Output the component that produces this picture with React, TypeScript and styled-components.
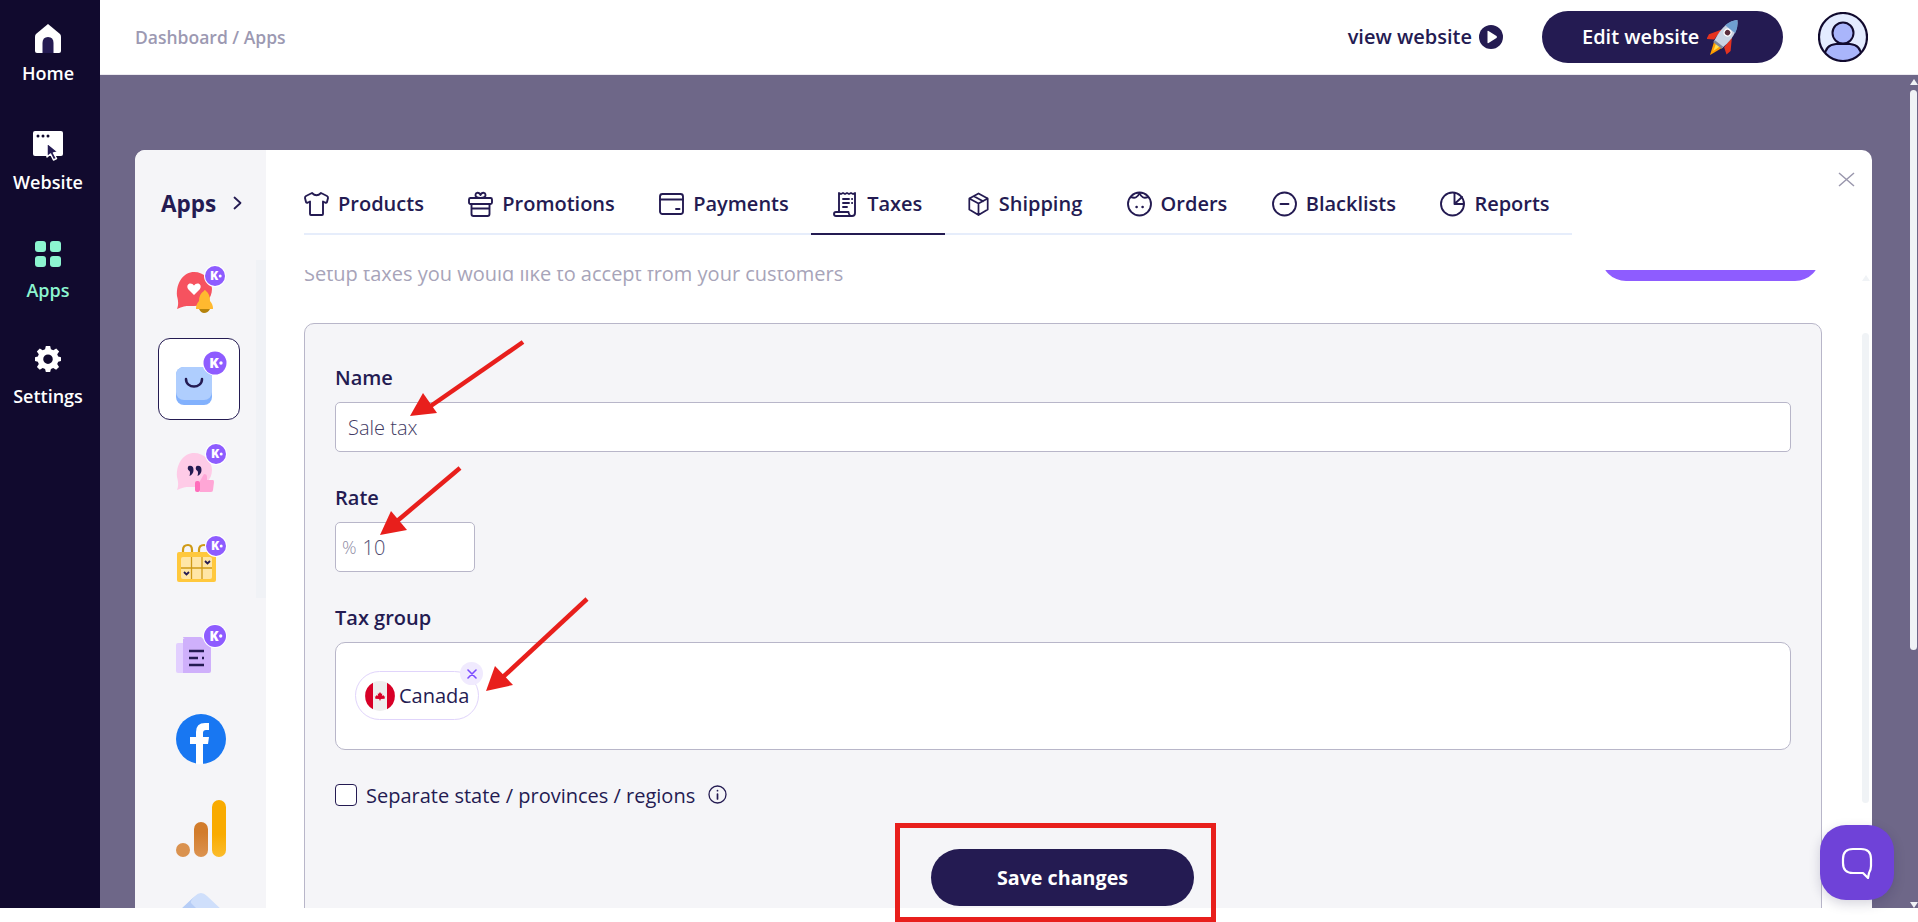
import React from 'react';
import styled, { createGlobalStyle } from 'styled-components';

const INK = '#241b52';

const GlobalStyle = createGlobalStyle`
  html, body {
    margin: 0;
    height: 100%;
    overflow: hidden;
    background: #fff;
    font-family: "Open Sans", "Noto Sans", sans-serif;
  }
  * { box-sizing: border-box; }
`;

const Page = styled.div`
  position: relative;
  width: 1918px;
  height: 922px;
  overflow: hidden;
`;

const Frame = styled.div`
  display: flex;
  height: 908px;
  overflow: hidden;
`;

const Sidebar = styled.nav`
  flex: 0 0 100px;
  display: flex;
  flex-direction: column;
  align-items: center;
  padding: 24px 4px 0 0;
  background: #110a2e;
`;

const NavItem = styled.a<{ $gap: number; $after: number; $active?: boolean }>`
  display: flex;
  flex-direction: column;
  align-items: center;
  gap: ${(p) => p.$gap}px;
  margin-bottom: ${(p) => p.$after}px;
  color: ${(p) => (p.$active ? '#8cf5d0' : '#fff')};
  font-size: 18px;
  font-weight: 600;
  line-height: 24px;
  svg { display: block; }
`;

const Main = styled.div`
  flex: 1;
  min-width: 0;
  display: flex;
  flex-direction: column;
`;

const Header = styled.header`
  flex: 0 0 75px;
  display: flex;
  align-items: center;
  padding: 0 50px 1px 35px;
  background: #fff;
  border-bottom: 1px solid #eceaf0;
`;

const Crumbs = styled.div`
  flex: 1;
  color: #9c99b2;
  font-size: 17.5px;
  font-weight: 600;
`;

const ViewLink = styled.a`
  display: flex;
  align-items: center;
  gap: 7px;
  color: ${INK};
  font-size: 20px;
  font-weight: 600;
`;

const EditButton = styled.button`
  display: flex;
  align-items: center;
  gap: 8px;
  width: 241px;
  height: 52px;
  margin: 0 35px 0 39px;
  padding: 0 0 0 40px;
  border: 0;
  border-radius: 26px;
  background: ${INK};
  color: #fff;
  font: 600 20px "Open Sans", sans-serif;
`;

const Backdrop = styled.div`
  flex: 1;
  min-height: 0;
  display: flex;
  justify-content: space-between;
  padding: 0 1px 0 35px;
  background: #6e6788;
`;

const Modal = styled.section`
  width: 1737px;
  margin-top: 75px;
  display: flex;
  background: #fff;
  border-radius: 10px 10px 0 0;
  overflow: hidden;
`;

const ModalSide = styled.aside`
  position: relative;
  flex: 0 0 131px;
  padding: 0 0 0 23px;
  background: #f5f5f8;
`;

const SideTrack = styled.div`
  position: absolute;
  top: 110px;
  right: 0;
  width: 10px;
  height: 338px;
  background: #f0f2f6;
`;

const SideTitle = styled.h2`
  display: flex;
  align-items: center;
  gap: 17px;
  height: 108px;
  margin: 0 0 -10px;
  padding: 0 0 2px 3px;
  color: ${INK};
  font-size: 22.5px;
  font-weight: 700;
`;

const AppList = styled.div`
  position: relative;
  display: flex;
  flex-direction: column;
  gap: 8px;
`;

const AppTile = styled.div<{ $active?: boolean }>`
  flex: 0 0 82px;
  width: 82px;
  border-radius: 12px;
  border: ${(p) => (p.$active ? `1.5px solid ${INK}` : '0')};
  background: ${(p) => (p.$active ? '#fff' : 'transparent')};
  svg { display: block; margin: ${(p) => (p.$active ? '-1.5px' : '0')}; }
`;

const ModalMain = styled.div`
  flex: 1;
  min-width: 0;
  display: flex;
  flex-direction: column;
  padding-left: 38px;
`;

const TabBar = styled.div`
  flex: 0 0 85px;
  min-height: 0;
  width: 1268px;
  display: flex;
  align-items: flex-start;
  border-bottom: 2px solid #e6edfb;
`;

const Tab = styled.a<{ $active?: boolean }>`
  display: flex;
  align-items: center;
  gap: 9px;
  height: 85px;
  padding: 24px 22.2px 0;
  color: ${INK};
  font-size: 20px;
  font-weight: 600;
  border-bottom: 2px solid ${(p) => (p.$active ? INK : 'transparent')};
  &:first-child { padding-left: 0; }
  svg { flex: none; }
`;

const CloseMark = styled.svg`
  position: absolute;
  top: 172px;
  left: 1838px;
`;

const Body = styled.div`
  flex: 1;
  min-height: 0;
  display: flex;
  margin-top: 35px;
`;

const Viewport = styled.div`
  flex: 0 0 1518px;
  overflow: hidden;
`;

const Scrolled = styled.div`
  margin-top: -39px;
`;

const TopRow = styled.div`
  display: flex;
  justify-content: space-between;
  height: 56px;
  margin-bottom: 36px;
  padding-right: 2px;
`;

const Lead = styled.p`
  align-self: flex-end;
  margin: 0;
  color: #a7a4b9;
  font-size: 20px;
  line-height: 26px;
`;

const AddButton = styled.button`
  width: 219px;
  height: 50px;
  border: 0;
  border-radius: 25px;
  background: #8e5cff;
`;

const Card = styled.div`
  padding: 42px 30px 60px;
  background: #f5f5f8;
  border: 1px solid #b8b6c9;
  border-radius: 10px;
`;

const Label = styled.label`
  display: block;
  margin-bottom: 12px;
  color: ${INK};
  font-size: 20px;
  font-weight: 600;
  line-height: 24px;
`;

const Field = styled.div`
  margin-bottom: 34px;
`;

const TextInput = styled.input`
  display: block;
  width: 100%;
  height: 50px;
  padding: 0 12px;
  border: 1px solid #b8b6c9;
  border-radius: 5px;
  background: #fff;
  color: #3f3a63;
  font: 300 20px "Open Sans", sans-serif;
  outline: none;
`;

const RateBox = styled.div`
  display: flex;
  align-items: center;
  gap: 6px;
  width: 140px;
  height: 50px;
  padding: 0 6px;
  border: 1px solid #b8b6c9;
  border-radius: 5px;
  background: #fff;
  color: #4f4a70;
  font-size: 20px;
  font-weight: 300;
`;

const RateSign = styled.span`
  color: #8f8ca4;
  font-size: 18px;
`;

const TagBox = styled.div`
  display: flex;
  align-items: flex-start;
  height: 108px;
  padding: 28px 19px;
  border: 1px solid #b8b6c9;
  border-radius: 10px;
  background: #fff;
`;

const Chip = styled.div`
  position: relative;
  display: flex;
  align-items: center;
  gap: 4px;
  width: 124px;
  height: 49px;
  padding-left: 9px;
  border: 1px solid #e0d4fb;
  border-radius: 25px;
  background: #fff;
  color: ${INK};
  font-size: 20px;
`;

const ChipClose = styled.span`
  position: absolute;
  top: -10px;
  right: -5px;
  display: flex;
  align-items: center;
  justify-content: center;
  width: 23px;
  height: 23px;
  border-radius: 50%;
  background: #f0eafe;
`;

const CheckRow = styled.div`
  display: flex;
  align-items: center;
  gap: 9px;
  height: 22px;
  margin: 0 0 43px;
  color: ${INK};
  font-size: 20px;
`;

const Box = styled.span`
  flex: none;
  width: 22px;
  height: 22px;
  border: 1.5px solid ${INK};
  border-radius: 4px;
  background: #fff;
`;

const InfoIcon = styled.svg`
  margin: -2px 0 0 4px;
`;

const SaveButton = styled.button`
  display: block;
  width: 263px;
  height: 57px;
  margin: 0 0 0 596px;
  border: 0;
  border-radius: 29px;
  background: ${INK};
  color: #fff;
  font: 700 19.7px "Open Sans", sans-serif;
`;

const InnerScroll = styled.div`
  display: flex;
  flex-direction: column;
  align-items: center;
  width: 7px;
  margin-left: 40px;
  padding-top: 5px;
`;

const ArrowUp = styled.span<{ $color: string }>`
  flex: none;
  width: 0;
  height: 0;
  border-left: 4px solid transparent;
  border-right: 4px solid transparent;
  border-bottom: 6px solid ${(p) => p.$color};
`;

const ArrowDown = styled(ArrowUp)`
  border-bottom: 0;
  border-top: 6px solid ${(p) => p.$color};
  margin-top: auto;
`;

const Thumb = styled.div<{ $top: number; $height: number }>`
  flex: none;
  width: 7px;
  height: ${(p) => p.$height}px;
  margin-top: ${(p) => p.$top}px;
  border-radius: 4px;
  background: #f0f3f6;
`;

const PageScroll = styled.div`
  display: flex;
  flex-direction: column;
  align-items: center;
  width: 7px;
  padding: 4px 0 0;
`;

const ChatBubble = styled.button`
  position: absolute;
  left: 1820px;
  top: 825px;
  display: flex;
  align-items: center;
  justify-content: center;
  width: 74px;
  height: 75px;
  padding: 0;
  border: 0;
  border-radius: 26px;
  background: #6f42d8;
  box-shadow: 0 4px 12px rgba(30, 20, 70, 0.18);
`;

const Annotations = styled.svg`
  position: absolute;
  inset: 0;
  pointer-events: none;
`;

const stroke = {
  fill: 'none',
  stroke: INK,
  strokeWidth: 1.9,
  strokeLinecap: 'round' as const,
  strokeLinejoin: 'round' as const,
};

const TabIcon = ({ children, width = 25 }: { children: React.ReactNode; width?: number }) => (
  <svg width={width} height="26" viewBox="0 0 25 26" {...stroke}>
    {children}
  </svg>
);

const tabs = [
  {
    label: 'Products',
    icon: (
      <TabIcon>
        <path d="M8 2 L2 5 Q1 5.500 1 7 L2 11 Q2.500 12 4 11.500 L6 10.500 V23 Q6 24 7 24 H18 Q19 24 19 23 V10.500 L21 11.500 Q22.500 12 23 11 L24 7 Q24 5.500 23 5 L17 2 Q12.500 6.500 8 2 Z" />
      </TabIcon>
    ),
  },
  {
    label: 'Promotions',
    icon: (
      <TabIcon>
        <rect x="1" y="7" width="23" height="6" rx="1.500" />
        <path d="M3.500 13 V23 Q3.500 25 5.500 25 H19.500 Q21.500 25 21.500 23 V13 M3.500 17.500 H21.500" />
        <path d="M12.500 7 C9 7 7 5.500 7.500 3.500 C8 1 11.500 1 12.500 4 C13.500 1 17 1 17.500 3.500 C18 5.500 16 7 12.500 7 Z" />
      </TabIcon>
    ),
  },
  {
    label: 'Payments',
    icon: (
      <TabIcon>
        <rect x="1" y="3" width="23" height="20" rx="2.500" />
        <path d="M1 8.500 H24 M17 18 H20.500" />
      </TabIcon>
    ),
  },
  {
    label: 'Taxes',
    active: true,
    icon: (
      <TabIcon>
        <path d="M6 21 V2 L8 3 L10 2 L12 3 L14 2 L16 3 L18 2 L20 3 L22 2 V22 Q22 25 19 25 H3 Q1 25 1 23 Q1 21 3 21 H15.500 Q16 25 19 25" />
        <path d="M10 8 H16 M10 12 H16 M10 16 H14 M19 8 H19.200 M19 12 H19.200" />
      </TabIcon>
    ),
  },
  {
    label: 'Shipping',
    icon: (
      <TabIcon width={23}>
        <path d="M12.500 1.500 L22.500 7 V19 L12.500 25 L2.500 19 V7 Z M2.500 7 L12.500 12.500 L22.500 7 M12.500 12.500 V25 M7.500 4.500 L17.500 10" />
      </TabIcon>
    ),
  },
  {
    label: 'Orders',
    icon: (
      <TabIcon>
        <circle cx="12.500" cy="13" r="11.500" />
        <path d="M4 6 Q10 8.500 12.500 2 Q15 8.500 21 6" />
        <path d="M9.500 16 H9.700 M15.500 16 H15.700" strokeWidth="2.400" />
      </TabIcon>
    ),
  },
  {
    label: 'Blacklists',
    icon: (
      <TabIcon>
        <circle cx="12.500" cy="13" r="11.500" />
        <path d="M8.500 13 H16.500" />
      </TabIcon>
    ),
  },
  {
    label: 'Reports',
    icon: (
      <TabIcon>
        <circle cx="12.500" cy="13" r="11.500" />
        <path d="M14.500 2 V13 H23.500 M14.500 13 L22 6" />
      </TabIcon>
    ),
  },
];

const KBadge = ({ x, y, r }: { x: number; y: number; r: number }) => (
  <g>
    <circle cx={x} cy={y} r={r + 1} fill="#fff" />
    <circle cx={x} cy={y} r={r} fill="#8e5cff" />
    <text
      x={x - r * 0.5}
      y={y + r * 0.42}
      fill="#fff"
      fontFamily="Open Sans, sans-serif"
      fontWeight="800"
      fontSize={r * 1.2}
    >
      K
    </text>
    <circle cx={x + r * 0.52} cy={y} r={r * 0.15} fill="#fff" />
  </g>
);

const BellBubble = () => (
  <svg width="82" height="82" viewBox="0 0 82 82">
    <path d="M36 24 C46 24 54 32 54 41 C54 51 46 58 36 58 C31 58 27 57 19 61 C21 56 20 52 19 48 C18 34 26 24 36 24 Z" fill="#f6525f" />
    <path d="M36 47 L30 41 Q28 37 31.500 35.500 Q34.500 35 36 37.500 Q37.500 35 40.500 35.500 Q44 37 42 41 Z" fill="#fff" />
    <g transform="translate(-6 -1)">
      <path d="M44 62 Q44 57 47 54 Q47 47 52 44 Q52.500 42 54 44 Q58 47 58 54 Q61 57 61 62 Z" fill="#ffb92f" />
      <path d="M47 62 H58 Q56 66 52 66 Q49 66 47 62 Z" fill="#b5830c" />
    </g>
    <KBadge x={57} y={28} r={10} />
  </svg>
);

const BagTile = () => (
  <svg width="82" height="82" viewBox="0 0 82 82">
    <rect x="18" y="29" width="36" height="38" rx="8" fill="#82b1fd" />
    <rect x="18" y="29" width="36" height="33" rx="8" fill="#afcefe" />
    <path d="M28 41 C28 51 44 51 44 41" fill="none" stroke={INK} strokeWidth="2.500" strokeLinecap="round" />
    <KBadge x={57} y={25} r={11.500} />
  </svg>
);

const QuoteBubble = () => (
  <svg width="82" height="82" viewBox="0 0 82 82">
    <path d="M36 25 C46 25 54 33 54 42 C54 52 46 59 36 59 C31 59 27 58 19 62 C21 57 20 53 19 49 C18 35 26 25 36 25 Z" fill="#fecbe7" />
    <g transform="translate(1.500 -1)">
      <path d="M29 39 Q34 38 34 43 Q34 47 30 49 Q31 45 30 44 Q27 42 29 39 Z M37 39 Q42 38 42 43 Q42 47 38 49 Q39 45 38 44 Q35 42 37 39 Z" fill={INK} />
    </g>
    <g transform="translate(-3 2)">
      <rect x="40" y="51" width="5" height="11" rx="2" fill="#ff6dbb" />
      <path d="M45 62 V51 L49 44 Q52 44 52 47 V50 H58 Q59 50 59 52 L58 60 Q58 62 56 62 Z" fill="#ffa6d6" />
    </g>
    <KBadge x={58} y={26} r={10} />
  </svg>
);

const CalendarTile = () => (
  <svg width="82" height="82" viewBox="0 0 82 82">
    <path d="M25 38 V32 Q25 27 30 27 Q34 27 34 32 V38 M41 38 V32 Q41 27 46 27 Q50 27 50 32 V38" fill="none" stroke="#cf9a16" strokeWidth="2.200" />
    <rect x="19" y="34" width="39" height="30" rx="2" fill="#ffc83d" />
    <rect x="23" y="39" width="31" height="22" rx="2" fill="#ffe6a6" />
    <path d="M23 50 H54 M33.500 39 V61 M44 39 V61" stroke="#cf9a16" strokeWidth="1.300" />
    <path d="M47 43 L49.500 45.500 L52 43 M26 54 L28.500 56.500 L31 54" fill="none" stroke={INK} strokeWidth="1.800" />
    <KBadge x={58} y={28} r={10} />
  </svg>
);

const DocTile = () => (
  <svg width="82" height="82" viewBox="0 0 82 82">
    <rect x="18" y="35" width="26" height="30" rx="2" fill="#e2cfff" />
    <path d="M27 31 Q25 31 25 29 H43 L53 38 V63 Q53 65 51 65 H25 V31 Z" fill="#cfb0fb" />
    <path d="M31 43 H46 M31 50 H40 M44 50 H46 M31 57 H46" stroke={INK} strokeWidth="2.400" />
    <KBadge x={57} y={28} r={11} />
  </svg>
);

const FacebookTile = () => (
  <svg width="82" height="82" viewBox="0 0 82 82">
    <circle cx="43" cy="41" r="25" fill="#1877f2" />
    <path d="M38 66 V46 H32 V39 H38 V34 Q38 25 47 25 H51 V32 H48 Q45 32 45 35 V39 H51 L50 46 H45 V66 Q41.500 66.500 38 66 Z" fill="#fff" />
  </svg>
);

const AnalyticsTile = () => (
  <svg width="82" height="82" viewBox="0 0 82 82">
    <defs>
      <linearGradient id="ga-tall" x1="0" y1="0" x2="0" y2="1">
        <stop offset="0.6" stopColor="#f9ab00" />
        <stop offset="1" stopColor="#fbbc2c" />
      </linearGradient>
      <linearGradient id="ga-mid" x1="0" y1="0" x2="0" y2="1">
        <stop offset="0.3" stopColor="#d27c2c" />
        <stop offset="1" stopColor="#dc9350" />
      </linearGradient>
    </defs>
    <rect x="54" y="12" width="14" height="57" rx="7" fill="url(#ga-tall)" />
    <rect x="36" y="34" width="14" height="35" rx="7" fill="url(#ga-mid)" />
    <circle cx="25" cy="62" r="7" fill="#da924f" />
  </svg>
);

const KiteTile = () => (
  <svg width="82" height="82" viewBox="0 0 82 82">
    <path d="M43 15 Q46 15 49 18 L66 34 H20 L37 18 Q40 15 43 15 Z" fill="#cfdffb" />
    <path d="M37 18 L20 34 H42 L33 25 Q32 23 37 18 Z" fill="#b6cdf6" />
  </svg>
);

const appIcons = [
  { id: 'alerts', node: <BellBubble /> },
  { id: 'store', node: <BagTile />, active: true },
  { id: 'reviews', node: <QuoteBubble /> },
  { id: 'calendar', node: <CalendarTile /> },
  { id: 'docs', node: <DocTile /> },
  { id: 'facebook', node: <FacebookTile /> },
  { id: 'analytics', node: <AnalyticsTile /> },
  { id: 'kite', node: <KiteTile /> },
];

const CanadaFlag = () => (
  <svg width="30" height="30" viewBox="0 0 30 30">
    <circle cx="15" cy="15" r="15" fill="#eeeeee" />
    <path d="M8 1.800 A15 15 0 0 0 8 28.200 Z M22 1.800 A15 15 0 0 1 22 28.200 Z" fill="#d80027" />
    <path d="M15 9.500 L16.500 12 L18 11.500 L17.500 15 L19.500 13.800 L20.500 15.500 L22 15.500 L21 17.500 L21.500 18.500 L16 19 L15.500 21 H14.500 L14 19 L8.500 18.500 L9 17.500 L8 15.500 L9.500 15.500 L10.500 13.800 L12.500 15 L12 11.500 L13.500 12 Z" fill="#d80027" transform="translate(3.750 3.750) scale(0.75)" />
  </svg>
);

const Rocket = () => (
  <svg width="37" height="36" viewBox="0 0 35 34">
    <g transform="rotate(38 17 16)">
      <path d="M12 26 L17 39 L22 26 Z" fill="#ff9d00" />
      <path d="M14.500 26 L17 34 L19.500 26 Z" fill="#ffe14d" />
      <path d="M11 13 L4 24 L5 29 L11 25 Z M23 13 L30 24 L29 29 L23 25 Z" fill="#e5331f" />
      <path d="M17 -3 C23 3 24 12 23 20 L22 27 H12 L11 20 C10 12 11 3 17 -3 Z" fill="#c9d3e3" />
      <path d="M17 -3 C20 0 22 3 23 8 H11 C12 3 14 0 17 -3 Z" fill="#6f9fd0" />
      <circle cx="17" cy="12" r="3.800" fill="#fff" />
      <circle cx="17" cy="12" r="2.600" fill="#5a2c3a" />
      <rect x="12" y="25" width="10" height="2.500" fill="#7d889b" />
    </g>
  </svg>
);

const App = () => (
  <Page>
    <GlobalStyle />
    <Frame>
      <Sidebar>
        <NavItem $gap={7} $after={46}>
          <svg width="26" height="30" viewBox="0 0 26 30">
            <path d="M13 0 L25 10 Q26 11 26 13 V27 Q26 29 24 29 H2 Q0 29 0 27 V13 Q0 11 1 10 Z" fill="#fff" />
            <path d="M7.500 29 V19 Q7.500 13 13 13 Q18.500 13 18.500 19 V29 Z" fill={INK} />
          </svg>
          Home
        </NavItem>
        <NavItem $gap={9} $after={47}>
          <svg width="30" height="30" viewBox="0 0 30 30">
            <path d="M2 0 H28 Q30 0 30 2 V23 Q30 25 28 25 H2 Q0 25 0 23 V2 Q0 0 2 0 Z" fill="#fff" />
            <circle cx="5" cy="5" r="1.500" fill="#110a2e" />
            <circle cx="10" cy="5" r="1.500" fill="#110a2e" />
            <circle cx="15" cy="5" r="1.500" fill="#110a2e" />
            <path d="M14 12 L14 26 L17.500 23 L20.500 29 L23.500 27.500 L20.500 22 L25 21 Z" fill="#241b52" stroke="#fff" strokeWidth="1.500" strokeLinejoin="round" />
          </svg>
          Website
        </NavItem>
        <NavItem $gap={11} $after={44} $active>
          <svg width="26" height="26" viewBox="0 0 26 26" fill="#8cf5d0">
            <rect width="11" height="11" rx="3" />
            <rect x="15" width="11" height="11" rx="3" />
            <rect y="15" width="11" height="11" rx="3" />
            <rect x="15" y="15" width="11" height="11" rx="3" />
          </svg>
          Apps
        </NavItem>
        <NavItem $gap={12} $after={0}>
          <svg width="26" height="26" viewBox="0 0 24 24">
            <path fill="#fff" fillRule="evenodd" d="M10 0 H14 L14.700 3.100 L16.900 4 L19.600 2.300 L22.300 5 L20.500 7.700 L21.400 9.800 L24 10.300 V13.900 L21.400 14.500 L20.500 16.700 L22.200 19.400 L19.500 22 L16.800 20.400 L14.700 21.200 L14 24 H10 L9.300 21.200 L7.100 20.400 L4.400 22 L1.800 19.400 L3.500 16.700 L2.600 14.500 L0 13.900 V10.300 L2.600 9.800 L3.500 7.700 L1.700 5 L4.400 2.300 L7.100 4 L9.300 3.100 Z M12 7.800 A4.400 4.400 0 1 0 12 16.600 A4.400 4.400 0 1 0 12 7.800 Z" />
          </svg>
          Settings
        </NavItem>
      </Sidebar>
      <Main>
        <Header>
          <Crumbs>Dashboard / Apps</Crumbs>
          <ViewLink>
            view website
            <svg width="24" height="24" viewBox="0 0 24 24">
              <circle cx="12" cy="12" r="12" fill={INK} />
              <path d="M8.500 6.500 Q8.500 5.500 9.500 6 L17.500 11 Q18.500 12 17.500 13 L9.500 18 Q8.500 18.500 8.500 17.500 Z" fill="#fff" />
            </svg>
          </ViewLink>
          <EditButton>
            Edit website
            <Rocket />
          </EditButton>
          <svg width="50" height="50" viewBox="0 0 50 50">
            <defs>
              <clipPath id="avatar-clip">
                <circle cx="25" cy="25" r="24" />
              </clipPath>
            </defs>
            <circle cx="25" cy="25" r="24" fill="#e3ebff" />
            <g clipPath="url(#avatar-clip)">
              <path d="M7 50 V44 Q7 33 18 32 H32 Q43 33 43 44 V50 Z" fill="#a9b5fb" stroke="#110a2e" strokeWidth="2" />
            </g>
            <circle cx="25" cy="21" r="10.500" fill="#a9b5fb" stroke="#110a2e" strokeWidth="2" />
            <circle cx="25" cy="25" r="24" fill="none" stroke="#110a2e" strokeWidth="2.200" />
          </svg>
        </Header>
        <Backdrop>
          <Modal>
            <ModalSide>
              <SideTrack />
              <SideTitle>
                Apps
                <svg width="9" height="14" viewBox="0 0 9 14" fill="none" stroke={INK} strokeWidth="1.800" strokeLinecap="round" strokeLinejoin="round">
                  <path d="M1.500 1.500 L7.500 7 L1.500 12.500" />
                </svg>
              </SideTitle>
              <AppList>
                {appIcons.map((app) => (
                  <AppTile key={app.id} $active={app.active}>
                    {app.node}
                  </AppTile>
                ))}
              </AppList>
            </ModalSide>
            <ModalMain>
              <TabBar>
                {tabs.map((tab) => (
                  <Tab key={tab.label} $active={tab.active}>
                    {tab.icon}
                    {tab.label}
                  </Tab>
                ))}
              </TabBar>
              <Body>
                <Viewport>
                  <Scrolled>
                    <TopRow>
                      <Lead>Setup taxes you would like to accept from your customers</Lead>
                      <AddButton aria-label="Add tax" />
                    </TopRow>
                    <Card>
                      <Field>
                        <Label>Name</Label>
                        <TextInput defaultValue="Sale tax" />
                      </Field>
                      <Field>
                        <Label>Rate</Label>
                        <RateBox>
                          <RateSign>%</RateSign>
                          10
                        </RateBox>
                      </Field>
                      <Field>
                        <Label>Tax group</Label>
                        <TagBox>
                          <Chip>
                            <CanadaFlag />
                            Canada
                            <ChipClose>
                              <svg width="10" height="10" viewBox="0 0 10 10" stroke="#7c4dff" strokeWidth="1.600" strokeLinecap="round">
                                <path d="M1 1 L9 9 M9 1 L1 9" />
                              </svg>
                            </ChipClose>
                          </Chip>
                        </TagBox>
                      </Field>
                      <CheckRow>
                        <Box />
                        Separate state / provinces / regions
                        <InfoIcon width="19" height="19" viewBox="0 0 19 19" fill="none" stroke={INK} strokeWidth="1.300" strokeLinecap="round">
                          <circle cx="9.500" cy="9.500" r="8.500" />
                          <path d="M9.500 9 V14 M9.500 5.500 V5.700" strokeWidth="1.700" />
                        </InfoIcon>
                      </CheckRow>
                      <SaveButton>Save changes</SaveButton>
                    </Card>
                  </Scrolled>
                </Viewport>
                <InnerScroll>
                  <ArrowUp $color="#f0f3f6" />
                  <Thumb $top={52} $height={470} />
                </InnerScroll>
              </Body>
            </ModalMain>
          </Modal>
          <PageScroll>
            <ArrowUp $color="#f0f3f6" />
            <Thumb $top={5} $height={560} />
            <ArrowDown $color="#f0f3f6" />
          </PageScroll>
        </Backdrop>
      </Main>
    </Frame>
    <CloseMark width="17" height="15" viewBox="0 0 17 15" stroke="#9a97ad" strokeWidth="1.500">
      <path d="M1 1 L16 14 M16 1 L1 14" />
    </CloseMark>
    <ChatBubble aria-label="Open chat">
      <svg width="36" height="36" viewBox="0 0 36 36" fill="none" stroke="#fff" strokeWidth="2.200" strokeLinejoin="round">
        <path d="M14 4 H22 Q32 4 32 14 V21 Q32 25 30 28 L29 33 L24 28 H14 Q4 28 4 18 V14 Q4 4 14 4 Z" />
      </svg>
    </ChatBubble>
    <Annotations width="1918" height="922" viewBox="0 0 1918 922">
      <g stroke="#e81f1c" strokeWidth="4.500" fill="none">
        <path d="M523 342 L425 410" />
        <path d="M460 468 L396 522" />
        <path d="M587 599 L503 677" />
        <rect x="897.500" y="825.500" width="316" height="94" strokeWidth="5" />
      </g>
      <g fill="#e81f1c">
        <polygon points="410,416 423,393 437,413" />
        <polygon points="380,535 391,511 407,530" />
        <polygon points="486,691 495,666 513,685" />
      </g>
    </Annotations>
  </Page>
);

export default App;
